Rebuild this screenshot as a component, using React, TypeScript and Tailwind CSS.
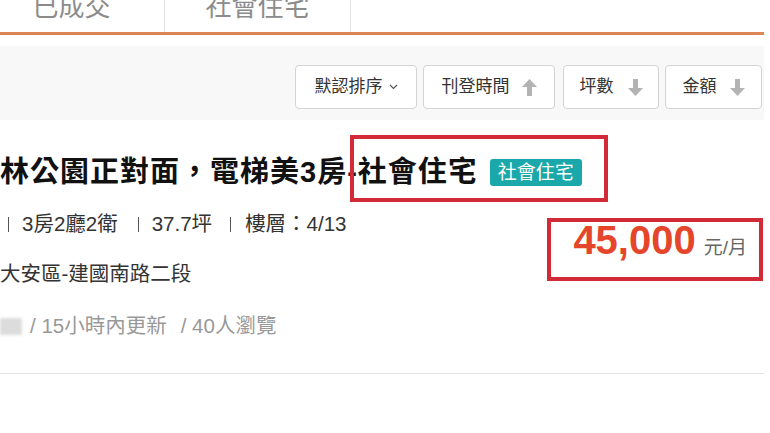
import React from "react";

const FONT = "font-['Liberation_Sans','Noto_Sans_CJK_TC',sans-serif]";

function ArrowUp() {
  return (
    <svg width="15" height="17" viewBox="0 0 15 17" aria-hidden="true">
      <path d="M7.5 0 L15 8 L10 8 L10 17 L5 17 L5 8 L0 8 Z" fill="#b3b3b3" />
    </svg>
  );
}

function ArrowDown() {
  return (
    <svg width="15" height="17" viewBox="0 0 15 17" aria-hidden="true">
      <path d="M7.5 17 L15 9 L10 9 L10 0 L5 0 L5 9 L0 9 Z" fill="#b3b3b3" />
    </svg>
  );
}

function Chevron() {
  return (
    <svg width="9" height="6" viewBox="0 0 9 6" aria-hidden="true">
      <path d="M1 1 L4.5 4.5 L8 1" fill="none" stroke="#555" strokeWidth="1.2" />
    </svg>
  );
}

function SortButton({
  label,
  width,
  gap,
  icon,
}: {
  label: string;
  width: string;
  gap: string;
  icon: React.ReactNode;
}) {
  return (
    <button
      className={`${width} ${gap} shrink-0 h-[44px] rounded-[4px] border border-[#d3d3d3] bg-white flex items-center justify-center text-[17px] text-[#333]`}
    >
      <span>{label}</span>
      {icon}
    </button>
  );
}

function Sep() {
  return <span className="inline-block w-px h-[15px] bg-[#555]" />;
}

export default function App() {
  return (
    <div lang="zh-TW" className={`w-[770px] h-[433px] bg-white overflow-hidden ${FONT}`}>
      <div className="w-[764px]">
        {/* tab strip */}
        <div className="flex h-[35px] border-b-[3px] border-[#dc8753]">
          <div className="-ml-[21px] w-[186px] h-[32px] border-r border-[#e3e3e3] flex items-end justify-center">
            <span className="text-[26px] leading-[26px] mb-[12px] text-[#8c8c8c]">已成交</span>
          </div>
          <div className="w-[186px] h-[32px] border-r border-[#e3e3e3] flex items-end justify-center">
            <span className="text-[26px] leading-[26px] mb-[12px] text-[#8c8c8c]">社會住宅</span>
          </div>
        </div>

        {/* sort bar */}
        <div className="mt-[11px] h-[74px] bg-[#f8f8f8] flex items-start justify-end pt-[19px] pr-[2px]">
          <SortButton label="默認排序" width="w-[122px]" gap="gap-[6px]" icon={<Chevron />} />
          <div className="w-[6px]" />
          <SortButton label="刊登時間" width="w-[132px]" gap="gap-[12px]" icon={<ArrowUp />} />
          <div className="w-[8px]" />
          <SortButton label="坪數" width="w-[96px]" gap="gap-[14px]" icon={<ArrowDown />} />
          <div className="w-[6px]" />
          <SortButton label="金額" width="w-[97px]" gap="gap-[13px]" icon={<ArrowDown />} />
        </div>

        {/* listing */}
        <div className="relative flex border-b border-[#e4e4e4] h-[254px]">
          <div className="flex-1 min-w-0 flex flex-col pt-[34px]">
            <div className="flex items-center h-[36px] whitespace-nowrap">
              <span className="shrink-0 text-[29px] leading-[36px] font-bold text-[#111] tracking-[1px]">
                林公園正對面，電梯美3房-社會住宅
              </span>
              <span className="shrink-0 ml-[12px] h-[27px] px-[8px] rounded-[3px] bg-[#1ba8aa] text-white text-[19px] leading-[27px]">
                社會住宅
              </span>
            </div>
            <div className="mt-[22px] flex items-center h-[24px] text-[20.5px] leading-[24px] text-[#333] whitespace-nowrap">
              <span className="ml-[8px] flex items-center gap-[13px]">
                <Sep />
                <span>3房2廳2衛</span>
              </span>
              <span className="ml-[20px] flex items-center gap-[13px]">
                <Sep />
                <span>37.7坪</span>
              </span>
              <span className="ml-[18px] flex items-center gap-[14px]">
                <Sep />
                <span>樓層：4/13</span>
              </span>
            </div>
            <div className="mt-[26px] h-[24px] text-[20.5px] leading-[24px] text-[#333] whitespace-nowrap">
              大安區-建國南路二段
            </div>
            <div className="mt-[28px] flex items-center h-[24px] text-[20.5px] leading-[24px] text-[#999] whitespace-nowrap">
              <span className="w-[22px] h-[17px] bg-[#dcdcdc] blur-[1.5px]" />
              <span className="ml-[8px]">/ 15小時內更新</span>
              <span className="ml-[14px]">/ 40人瀏覽</span>
            </div>
          </div>

          <div className="shrink-0 pt-[100px] pr-[17px]">
            <div className="flex items-baseline whitespace-nowrap">
              <span className="text-[40px] leading-[40px] font-bold text-[#e5452a]">45,000</span>
              <span className="ml-[8px] text-[19px] text-[#666]">元/月</span>
            </div>
          </div>

          {/* highlight frames */}
          <div className="absolute left-[350px] top-[15px] w-[258px] h-[67px] border-[4px] border-[#d22a36]" />
          <div className="absolute left-[547px] top-[98px] w-[216px] h-[63px] border-[4px] border-[#d22a36]" />
        </div>
      </div>
    </div>
  );
}
